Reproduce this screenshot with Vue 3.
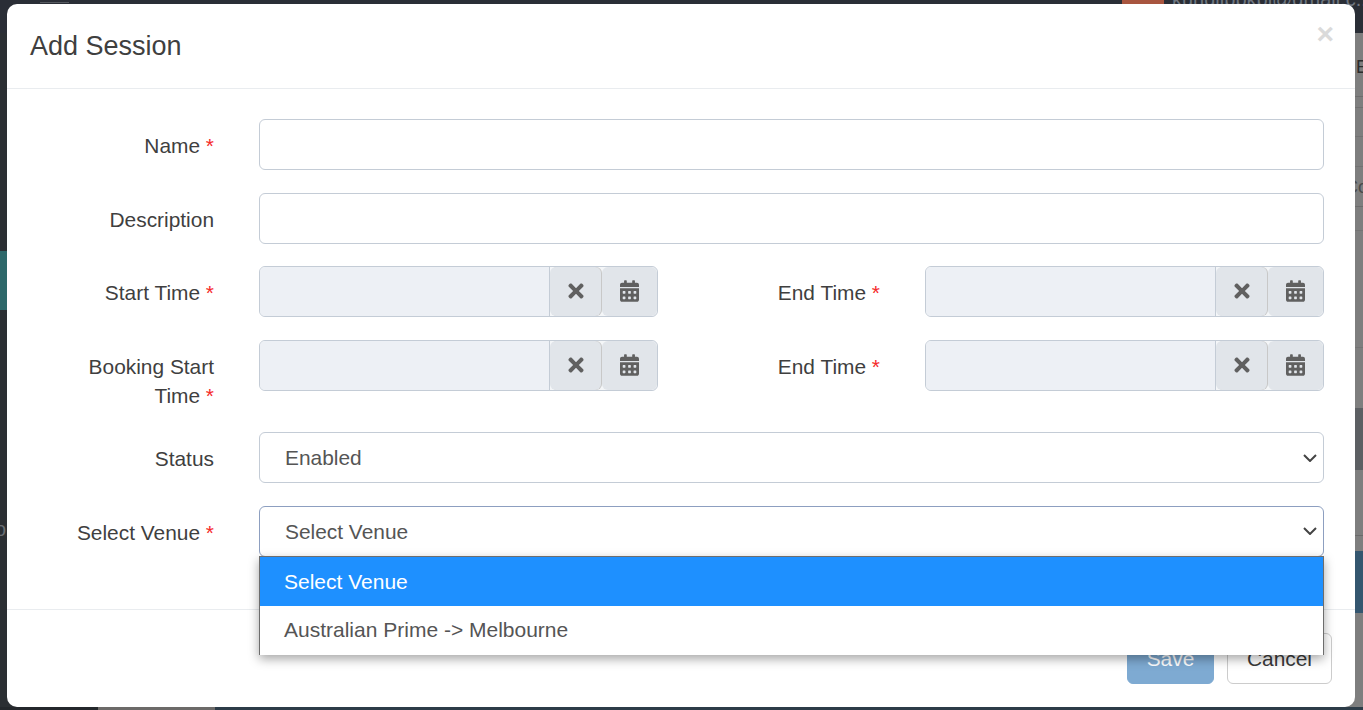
<script setup>
const times = 'M242.72 256l100.07-100.07c12.28-12.28 12.28-32.19 0-44.48l-22.24-22.24c-12.28-12.28-32.19-12.28-44.48 0L176 189.28 75.93 89.21c-12.28-12.28-32.19-12.28-44.48 0L9.21 111.45c-12.28 12.28-12.28 32.19 0 44.48L109.28 256 9.21 356.07c-12.28 12.28-12.28 32.19 0 44.48l22.24 22.24c12.28 12.28 32.2 12.28 44.48 0L176 322.72l100.07 100.07c12.28 12.28 32.2 12.28 44.48 0l22.24-22.24c12.28-12.28 12.28-32.19 0-44.48L242.72 256z'
const cal = 'M0 464c0 26.5 21.5 48 48 48h352c26.5 0 48-21.5 48-48V192H0v272zm320-196c0-6.6 5.4-12 12-12h40c6.6 0 12 5.4 12 12v40c0 6.6-5.4 12-12 12h-40c-6.6 0-12-5.4-12-12v-40zm0 128c0-6.6 5.4-12 12-12h40c6.6 0 12 5.4 12 12v40c0 6.6-5.4 12-12 12h-40c-6.6 0-12-5.4-12-12v-40zM192 268c0-6.6 5.4-12 12-12h40c6.6 0 12 5.4 12 12v40c0 6.6-5.4 12-12 12h-40c-6.6 0-12-5.4-12-12v-40zm0 128c0-6.6 5.4-12 12-12h40c6.6 0 12 5.4 12 12v40c0 6.6-5.4 12-12 12h-40c-6.6 0-12-5.4-12-12v-40zM64 268c0-6.6 5.4-12 12-12h40c6.6 0 12 5.4 12 12v40c0 6.6-5.4 12-12 12H76c-6.6 0-12-5.4-12-12v-40zm0 128c0-6.6 5.4-12 12-12h40c6.6 0 12 5.4 12 12v40c0 6.6-5.4 12-12 12H76c-6.6 0-12-5.4-12-12v-40zM400 64h-48V16c0-8.8-7.2-16-16-16h-32c-8.8 0-16 7.2-16 16v48H160V16c0-8.8-7.2-16-16-16h-32c-8.8 0-16 7.2-16 16v48H48C21.5 64 0 85.5 0 112v48h448v-48c0-26.5-21.5-48-48-48z'
const dateRows = [
  { left: ['Start Time'], right: 'End Time' },
  { left: ['Booking Start', 'Time'], right: 'End Time' },
]
</script>

<template>
  <div class="page">
    <div class="bg-left"></div>
    <div class="bg-teal"></div>
    <div class="bg-left-text">o</div>
    <div class="bg-bar"></div>
    <div class="bg-tick"></div>
    <div class="bg-avatar"></div>
    <div class="bg-mail">kundlipbkbl@gmail.c...</div>
    <div class="bg-right"></div>
    <div class="bg-letter e">E</div>
    <div class="bg-letter c">Co</div>
    <div class="bg-block"></div>
    <div class="bg-blue"></div>
    <div class="bg-bottom"></div>

    <section class="modal">
      <header class="head">
        <h5 class="title">Add Session</h5>
        <span class="close">×</span>
      </header>

      <div class="body">
        <div class="row">
          <label class="lbl">Name <i>*</i></label>
          <div class="ctl"></div>
        </div>
        <div class="row">
          <label class="lbl">Description</label>
          <div class="ctl"></div>
        </div>

        <div v-for="(r, i) in dateRows" :key="i" class="row">
          <label class="lbl">
            <template v-if="r.left.length === 1">{{ r.left[0] }} <i>*</i></template>
            <template v-else>{{ r.left[0] }}<br />{{ r.left[1] }} <i>*</i></template>
          </label>
          <div class="split">
            <div class="group">
              <div class="ro"></div>
              <span class="add first"><svg class="ic-x" viewBox="0 0 352 512"><path :d="times" /></svg></span>
              <span class="add last"><svg class="ic-c" viewBox="0 0 448 512"><path :d="cal" /></svg></span>
            </div>
            <label class="lbl lbl-r">{{ r.right }} <i>*</i></label>
            <div class="group">
              <div class="ro"></div>
              <span class="add first"><svg class="ic-x" viewBox="0 0 352 512"><path :d="times" /></svg></span>
              <span class="add last"><svg class="ic-c" viewBox="0 0 448 512"><path :d="cal" /></svg></span>
            </div>
          </div>
        </div>

        <div class="row">
          <label class="lbl">Status</label>
          <div class="ctl sel">
            <span>Enabled</span>
            <svg class="chev" viewBox="0 0 14 8"><path d="M1 1l6 6 6-6" /></svg>
          </div>
        </div>
        <div class="row">
          <label class="lbl">Select Venue <i>*</i></label>
          <div class="venue">
            <div class="ctl sel focus">
              <span>Select Venue</span>
              <svg class="chev" viewBox="0 0 14 8"><path d="M1 1l6 6 6-6" /></svg>
            </div>
            <ul class="menu">
              <li class="on">Select Venue</li>
              <li>Australian Prime -&gt; Melbourne</li>
            </ul>
          </div>
        </div>
      </div>

      <footer class="foot">
        <button class="btn save">Save</button>
        <button class="btn cancel">Cancel</button>
      </footer>
    </section>
  </div>
</template>

<style>
html, body { margin: 0; overflow: hidden; }
</style>

<style scoped>
.page {
  position: relative;
  width: 1363px;
  height: 710px;
  overflow: hidden;
  background: #7f8082;
  font-family: "Liberation Sans", Arial, sans-serif;
  color: #3f3f3f;
}
.bg-left { position: absolute; left: 0; top: 0; width: 40px; height: 710px; background: #2b2f33; }
.bg-teal { position: absolute; left: 0; top: 251px; width: 40px; height: 59px; background: #2d686a; }
.bg-left-text { position: absolute; left: -5px; top: 518px; font-size: 20px; color: #6a6e72; }
.bg-bar { position: absolute; left: 0; top: 0; width: 1363px; height: 33px; background: #2a2e36; }
.bg-tick { position: absolute; left: 40px; top: 2px; width: 29px; height: 1px; background: #565a60; }
.bg-avatar { position: absolute; left: 1122px; top: 0; width: 42px; height: 4px; background: #a8553f; }
.bg-mail { position: absolute; left: 1172px; top: -13px; font-size: 20px; line-height: 24px; color: #6f7680; white-space: nowrap; }
.bg-right {
  position: absolute;
  left: 1340px;
  top: 33px;
  width: 23px;
  height: 677px;
  background:
    linear-gradient(#6d6d6d, #6d6d6d) 0 63px / 100% 1px no-repeat,
    linear-gradient(#707070, #707070) 0 74px / 100% 1px no-repeat,
    linear-gradient(#727272, #727272) 0 103px / 100% 1px no-repeat,
    linear-gradient(#727272, #727272) 0 133px / 100% 1px no-repeat,
    linear-gradient(#6c6c6c, #6c6c6c) 0 173px / 100% 1px no-repeat,
    linear-gradient(#747474, #747474) 0 197px / 100% 1px no-repeat,
    linear-gradient(#747474, #747474) 0 314px / 100% 1px no-repeat,
    linear-gradient(#6a6a6a, #6a6a6a) 0 502px / 100% 1px no-repeat,
    #7e7e7e;
}
.bg-letter { position: absolute; left: 1356px; font-size: 18px; line-height: 20px; color: #2c2c2c; }
.bg-letter.e { top: 57px; }
.bg-letter.c { left: 1345px; top: 177px; color: #4a4a4a; }
.bg-block { position: absolute; left: 1340px; top: 408px; width: 23px; height: 62px; background: #5c5f63; }
.bg-blue { position: absolute; left: 1340px; top: 551px; width: 23px; height: 62px; background: #34566f; }
.bg-bottom { position: absolute; left: 0; top: 707px; width: 1363px; height: 3px; background: linear-gradient(90deg, #24282c 0, #24282c 98px, #6c6a68 98px, #6c6a68 215px, #2d3c48 215px, #2d3c48 100%); }

.modal {
  position: absolute;
  left: 7px;
  top: 4px;
  width: 1348px;
  height: 703px;
  background: #fff;
  border-radius: 10px;
  display: flex;
  flex-direction: column;
}
.head {
  height: 85px;
  box-sizing: border-box;
  border-bottom: 1px solid #e9ecef;
  padding: 25px 23px 0;
  position: relative;
}
.title { margin: 0; font-size: 27px; line-height: 34px; font-weight: 400; color: #3f3f3f; }
.close {
  position: absolute;
  right: 21px;
  top: 12px;
  font-size: 30px;
  line-height: 36px;
  font-weight: 700;
  color: #dadada;
}
.body { flex: 1; padding: 30.25px 31px 0 0; }
.row {
  display: grid;
  grid-template-columns: 206px 1fr;
  column-gap: 45px;
  align-items: start;
  margin-bottom: 22.9px;
  margin-left: 1px;
}
.lbl {
  display: block;
  text-align: right;
  font-size: 20.9px;
  line-height: 29px;
  padding-top: 12px;
  margin-bottom: -0.6px;
  color: #3f3f3f;
}
.lbl i { font-style: normal; color: #f52a2a; }
.ctl {
  box-sizing: border-box;
  height: 50.7px;
  border: 1px solid #c4ccd6;
  border-radius: 6px;
  background: #fff;
}
.sel {
  display: flex;
  align-items: center;
  justify-content: space-between;
  padding: 0 6px 0 25px;
  font-size: 20.9px;
  color: #555;
}
.sel.focus span { margin-top: 1px; }
.sel.focus { border-color: #8d9fc0; }
.chev { width: 14px; height: 8px; fill: none; stroke: #444; stroke-width: 2; }
.split { display: grid; grid-template-columns: 399px 267px 399px; }
.lbl-r { width: 222px; white-space: nowrap; }
.group {
  display: flex;
  box-sizing: border-box;
  height: 50.7px;
  border: 1px solid #c4ccd6;
  border-radius: 6px;
  overflow: hidden;
  background: #f4f6f8;
}
.ro {
  flex: 1;
  box-sizing: border-box;
  background: #edf0f5;
  border-right: 1px solid #c4ccd6;
}
.add {
  box-sizing: border-box;
  display: flex;
  align-items: center;
  justify-content: center;
  background: #e1e5ea;
  border-radius: 6px;
}
.add.first { width: 51px; margin-right: 1px; box-shadow: 1px 0 0 #c8c8c8; }
.add.last { width: 55px; }
.add svg { fill: #606060; display: block; }
.ic-x { width: 16px; height: 22px; margin-top: -1px; }
.ic-c { width: 19px; height: 22px; margin-top: -1px; }

.venue { position: relative; height: 50.7px; }
.menu {
  position: absolute;
  left: 0;
  right: 0;
  top: 50px;
  margin: 0;
  padding: 0;
  list-style: none;
  background: #fff;
  border-top: 1px solid #6d6d6d;
  border-left: 1px solid #6d6d6d;
  border-right: 1px solid #6d6d6d;
  box-shadow: 0 4px 10px rgba(0, 0, 0, 0.35);
  z-index: 3;
}
.menu li {
  height: 49px;
  line-height: 49px;
  padding-left: 24px;
  font-size: 21px;
  color: #555;
}
.menu li:last-child { line-height: 47px; }
.menu li.on { background: #1e90ff; color: #fff; }

.foot {
  height: 98px;
  box-sizing: border-box;
  border-top: 1px solid #e9ecef;
  padding-top: 23px;
  padding-right: 23px;
  display: flex;
  justify-content: flex-end;
  gap: 13px;
}
.btn {
  height: 51px;
  box-sizing: border-box;
  font: 400 20.9px "Liberation Sans", Arial, sans-serif;
  border-radius: 6px;
  padding: 1px 0 0;
}
.save { width: 87px; background: #7eaad2; border: 1px solid #7eaad2; color: #fff; }
.cancel { width: 105px; background: #fff; border: 1px solid #ccc; color: #3a3a3a; }
</style>
